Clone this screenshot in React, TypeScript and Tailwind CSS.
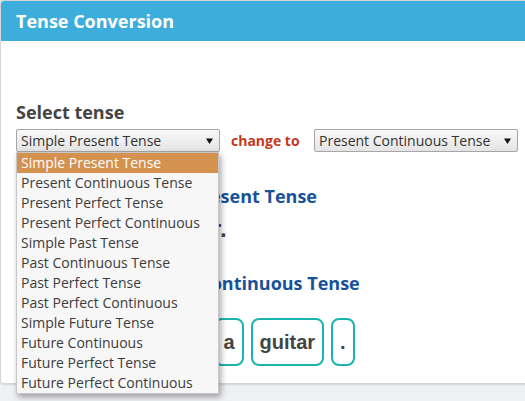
const TENSES = [
  "Simple Present Tense",
  "Present Continuous Tense",
  "Present Perfect Tense",
  "Present Perfect Continuous",
  "Simple Past Tense",
  "Past Continuous Tense",
  "Past Perfect Tense",
  "Past Perfect Continuous",
  "Simple Future Tense",
  "Future Continuous",
  "Future Perfect Tense",
  "Future Perfect Continuous",
];

const WORDS = ["She", "is", "playing", "a", "guitar", "."];

function Caret(): JSX.Element {
  return (
    <svg width="7" height="6" viewBox="0 0 7 6" className="shrink-0">
      <path d="M0 0.5 H7 L3.5 6 Z" fill="#111" />
    </svg>
  );
}

function FakeSelect({ value, open }: { value: string; open?: boolean }): JSX.Element {
  return (
    <div className="relative w-[204px]">
      <div className="flex h-[23px] items-center justify-between rounded-[2px] border border-[#a6a6a6] bg-gradient-to-b from-[#f9f9f9] to-[#e4e4e4] pl-[4px] pr-[6px] text-[14px] leading-[20px] text-[#333]">
        <span>{value}</span>
        <Caret />
      </div>
      {open && (
        <ul className="absolute left-0 top-[23px] z-10 w-[203px] border border-[#c8c8c8] bg-[#f7f7f7] shadow-[2px_3px_6px_rgba(0,0,0,0.35)]">
          {TENSES.map((t, i) => (
            <li
              key={t}
              className={
                i === 0
                  ? "h-[20px] bg-[#d49150] pl-[4px] text-[14px] leading-[20px] text-white"
                  : "h-[20px] pl-[4px] text-[14px] leading-[20px] text-[#3c3c3c]"
              }
            >
              {t}
            </li>
          ))}
        </ul>
      )}
    </div>
  );
}

export default function App(): JSX.Element {
  return (
    <div className="h-[401px] w-[525px] overflow-hidden bg-[#eff0f4] font-['Open_Sans',sans-serif]">
      <div className="w-[560px] rounded-[4px] border border-r-0 border-[#d6d6d6] bg-white shadow-[0_1px_2px_rgba(0,0,0,0.12)]">
        <div className="flex h-[40px] items-center rounded-t-[3px] bg-[#3daedb] px-[15px]">
          <h1 className="text-[18px] font-bold text-white">Tense Conversion</h1>
        </div>

        <div className="px-[15px] pb-[17px]">
          <h2 className="mt-[59px] text-[18px] font-bold leading-[24px] text-[#444]">Select tense</h2>

          <div className="mt-[5px] flex items-center">
            <FakeSelect value="Simple Present Tense" open />
            <span className="ml-[11px] w-[83px] text-[14px] font-bold leading-[20px] text-[#c33a1e]">change to</span>
            <FakeSelect value="Present Continuous Tense" />
          </div>

          <h3 className="mt-[32px] text-[18px] font-bold leading-[24px] text-[#17529a]">
            Sentence in Simple Present Tense
          </h3>
          <p className="mt-[6px] font-['Liberation_Sans',Arial,sans-serif] text-[24px] font-bold leading-[30px] text-[#444]">
            She plays a guitar.
          </p>

          <h3 className="mt-[27px] text-[18px] font-bold leading-[24px] text-[#17529a]">
            Sentence in Present Continuous Tense
          </h3>
          <div className="mt-[23px] flex gap-[7px]">
            {WORDS.map((w, i) => (
              <div
                key={i}
                className="flex h-[48px] items-center rounded-[8px] border-2 border-[#1ab4ae] px-[7px] font-['Liberation_Sans',Arial,sans-serif] text-[20px] font-bold text-[#444]"
              >
                {w}
              </div>
            ))}
          </div>
        </div>
      </div>
    </div>
  );
}
